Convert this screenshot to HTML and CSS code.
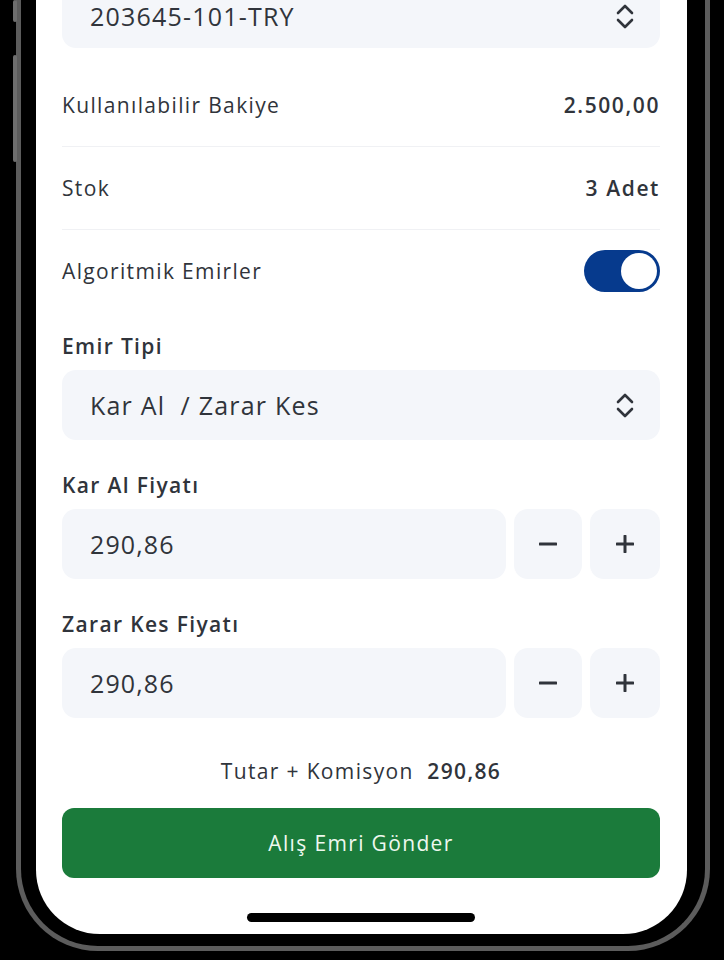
FILE: index.html
```html
<!DOCTYPE html>
<html lang="tr">
<head>
    <meta charset="UTF-8">
    <meta name="viewport" content="width=device-width, initial-scale=1.0">
    <title>Alış Emri</title>
    <link rel="stylesheet" href="styles.css">
</head>
<body>
    <div class="device">
        <span class="side side--a"></span>
        <span class="side side--b"></span>
        <div class="screen">
            <div class="select select--top">
                <span>203645-101-TRY</span>
                <svg class="chev" viewBox="0 0 18 26" width="18" height="26">
                    <path d="M2 10 L9 3 L16 10 M2 17 L9 24 L16 17"/>
                </svg>
            </div>

            <div class="rows">
                <div class="row">
                    <span>Kullanılabilir Bakiye</span>
                    <b>2.500,00</b>
                </div>
                <div class="row">
                    <span>Stok</span>
                    <b>3 Adet</b>
                </div>
                <div class="row">
                    <span>Algoritmik Emirler</span>
                    <div class="switch"><i class="switch__knob"></i></div>
                </div>
            </div>

            <div class="field field--first">
                <label class="field__label">Emir Tipi</label>
                <div class="select">
                    <span>Kar Al&nbsp; / Zarar Kes</span>
                    <svg class="chev" viewBox="0 0 18 26" width="18" height="26">
                        <path d="M2 10 L9 3 L16 10 M2 17 L9 24 L16 17"/>
                    </svg>
                </div>
            </div>

            <div class="field">
                <label class="field__label">Kar Al Fiyatı</label>
                <div class="stepper">
                    <div class="stepper__input">290,86</div>
                    <button class="stepper__btn">
                        <svg viewBox="0 0 18 18" width="18" height="18"><path d="M1 9 H17"/></svg>
                    </button>
                    <button class="stepper__btn">
                        <svg viewBox="0 0 18 18" width="18" height="18"><path d="M1 9 H17 M9 1 V17"/></svg>
                    </button>
                </div>
            </div>

            <div class="field">
                <label class="field__label">Zarar Kes Fiyatı</label>
                <div class="stepper">
                    <div class="stepper__input">290,86</div>
                    <button class="stepper__btn">
                        <svg viewBox="0 0 18 18" width="18" height="18"><path d="M1 9 H17"/></svg>
                    </button>
                    <button class="stepper__btn">
                        <svg viewBox="0 0 18 18" width="18" height="18"><path d="M1 9 H17 M9 1 V17"/></svg>
                    </button>
                </div>
            </div>

            <p class="total">Tutar + Komisyon &nbsp;<b>290,86</b></p>

            <button class="submit">Alış Emri Gönder</button>

            <div class="home"></div>
        </div>
    </div>
</body>
</html>
```

FILE: styles.css
```css
body {
    margin: 0;
    height: 960px;
    overflow: hidden;
    background: #000;
    color: #30343b;
    font-family: "Open Sans", "Noto Sans", sans-serif;
    letter-spacing: 1.35px;
}

.device {
    position: relative;
    margin-left: 16px;
    width: 694px;
    padding: 0 16px 12px 15px;
    border: 5px solid #5c5c5c;
    border-top: 0;
    border-radius: 0 0 82px 82px;
    background: #000;
    box-sizing: border-box;
}

.side {
    position: absolute;
    left: -8px;
    width: 4px;
    border-radius: 2px;
    background: #6e6e6e;
}

.side--a {
    top: 0;
    height: 22px;
}

.side--b {
    top: 55px;
    height: 107px;
}

.screen {
    width: 651px;
    padding: 0 27px 12px 26px;
    box-sizing: border-box;
    border-radius: 0 0 64px 64px;
    background: #fff;
}

.select {
    display: flex;
    align-items: center;
    justify-content: space-between;
    height: 70px;
    padding: 0 26px 0 28px;
    box-sizing: border-box;
    border-radius: 14px;
    background: #f4f6fa;
    font-size: 25px;
    letter-spacing: 1.2px;
}

.select--top {
    height: 48px;
    padding-bottom: 16px;
    border-radius: 0 0 14px 14px;
}

.chev {
    fill: none;
    stroke: #30343b;
    stroke-width: 2.6;
    stroke-linecap: round;
    stroke-linejoin: round;
}

.rows {
    margin-top: 16px;
}

.row {
    display: flex;
    align-items: center;
    justify-content: space-between;
    height: 82px;
    border-bottom: 1px solid #f0f1f4;
    font-size: 21px;
}

.row:last-child {
    border-bottom: 0;
}

.row b {
    font-weight: 600;
    letter-spacing: 1.6px;
}

.switch {
    display: flex;
    align-items: center;
    justify-content: flex-end;
    width: 76px;
    height: 42px;
    padding: 3px;
    box-sizing: border-box;
    border-radius: 21px;
    background: #063a8d;
}

.switch__knob {
    width: 36px;
    height: 36px;
    border-radius: 50%;
    background: #fff;
}

.field {
    margin-top: 31px;
}

.field--first {
    margin-top: 20px;
}

.field__label {
    display: block;
    margin-bottom: 10px;
    line-height: 28px;
    font-size: 21px;
    font-weight: 600;
}

.stepper {
    display: grid;
    grid-template-columns: 1fr 68px 70px;
    gap: 8px;
    height: 70px;
}

.stepper__input {
    display: flex;
    align-items: center;
    padding-left: 28px;
    border-radius: 14px;
    background: #f4f6fa;
    font-size: 25px;
    letter-spacing: 1.1px;
}

.stepper__btn {
    display: flex;
    align-items: center;
    justify-content: center;
    padding: 0;
    border: 0;
    border-radius: 14px;
    background: #f4f6fa;
}

.stepper__btn svg {
    fill: none;
    stroke: #30343b;
    stroke-width: 3;
    stroke-linecap: round;
}

.total {
    margin: 39px 0 0;
    line-height: 28px;
    text-align: center;
    font-size: 21px;
}

.total b {
    font-weight: 600;
}

.submit {
    display: block;
    width: 100%;
    height: 70px;
    margin-top: 23px;
    border: 0;
    border-radius: 12px;
    background: #1b7b3b;
    color: #eef8ef;
    font: 21px "Open Sans", "Noto Sans", sans-serif;
    letter-spacing: 1.35px;
}

.home {
    width: 228px;
    height: 9px;
    margin: 35px auto 0;
    border-radius: 5px;
    background: #000;
}
```
